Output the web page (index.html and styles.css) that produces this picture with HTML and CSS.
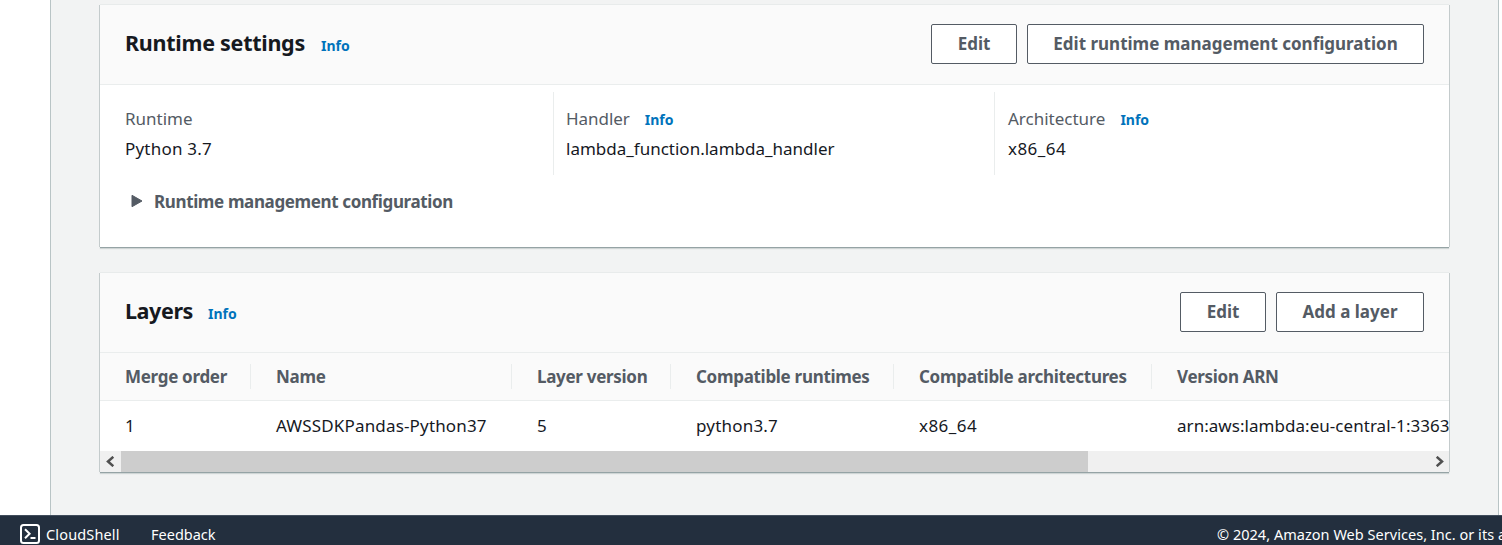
FILE: index.html
```html
<!DOCTYPE html>
<html lang="en">
<head>
<meta charset="utf-8">
<title>Lambda function</title>
<link rel="stylesheet" href="styles.css">
</head>
<body>
<div class="app">
  <main class="content">
    <section class="card runtime">
      <header class="card-header">
        <h2>Runtime settings</h2><a class="info">Info</a>
        <div class="actions"><button>Edit</button><button class="wide">Edit runtime management configuration</button></div>
      </header>
      <div class="columns">
        <div class="column"><div class="label">Runtime</div><div class="value version">Python 3.7</div></div>
        <div class="column"><div class="label name">Handler<a class="info">Info</a></div><div class="value">lambda_function.lambda_handler</div></div>
        <div class="column"><div class="label">Architecture<a class="info">Info</a></div><div class="value arch">x86_64</div></div>
      </div>
      <div class="expander">
        <svg width="12" height="14" viewBox="0 0 12 14"><path d="M1 1.3v11.4l10-5.7z" fill="#545b64" stroke="#545b64" stroke-linejoin="round"/></svg>
        <span>Runtime management configuration</span>
      </div>
    </section>
    <section class="card layers">
      <header class="card-header">
        <h2>Layers</h2><a class="info">Info</a>
        <div class="actions"><button>Edit</button><button class="add">Add a layer</button></div>
      </header>
      <div class="table">
        <div class="row head"><span>Merge order</span><span>Name</span><span>Layer version</span><span>Compatible runtimes</span><span>Compatible architectures</span><span>Version ARN</span></div>
        <div class="row"><span>1</span><span class="layer-name">AWSSDKPandas-Python37</span><span>5</span><span class="version">python3.7</span><span class="arch">x86_64</span><span class="arn">arn:aws:lambda:eu-central-1:3363</span></div>
      </div>
      <div class="scrollbar">
        <div class="arrow"><svg width="9" height="11" viewBox="0 0 9 11"><path d="M7.3 .8L2 5.5l5.3 4.7" fill="none" stroke="#505050" stroke-width="2.5"/></svg></div>
        <div class="thumb"></div>
        <div class="arrow next"><svg width="9" height="11" viewBox="0 0 9 11"><path d="M1.7 .8L7 5.5l-5.3 4.7" fill="none" stroke="#505050" stroke-width="2.5"/></svg></div>
      </div>
    </section>
  </main>
  <footer class="footer">
    <svg class="shell" width="20" height="20" viewBox="0 0 20 20" fill="none" stroke="#fff" stroke-width="2"><rect x="1" y="1" width="18" height="18" rx="2.5"/><path d="M5 5.2l4.6 4.5L5 14.2M10.5 14h5"/></svg>
    <span class="cloudshell">CloudShell</span>
    <span class="feedback">Feedback</span>
    <span class="copyright">© 2024, Amazon Web Services, Inc. or its a</span>
  </footer>
</div>
</body>
</html>
```
FILE: styles.css
```css
* { box-sizing: border-box; }
body { margin: 0; overflow: hidden; background: #fff; color: #16191f; font-family: "Noto Sans", sans-serif; font-size: 17px; }
.app { display: flex; flex-direction: column; height: 545px; }
.content { flex: none; height: 515px; margin-left: 50px; width: 1449px; padding: 5px 49px 0; background: #f2f3f3; border-left: 1px solid #b9c4c5; border-right: 1px solid #b9c4c5; }
.card { width: 1349px; background: #fff; box-shadow: 0 -1px 0 #e8ebeb, 0 1px 0 #95a3a5, 1px 0 0 #c4cbcc, -1px 0 0 #c4cbcc, 0 2px 1px #cfd5d5; }
.runtime { height: 242px; margin-bottom: 26px; }
.layers { height: 199px; }
.card-header { display: flex; height: 80px; padding: 0 25px; background: #fafafa; border-bottom: 1px solid #eaeded; }
h2 { margin: 23px 16px 0 0; font-size: 21.5px; line-height: 30px; letter-spacing: -.27px; white-space: nowrap; }
.layers h2 { margin-right: 15px; letter-spacing: -.4px; }
.info { color: #0073bb; font-size: 14px; line-height: 20px; font-weight: 700; letter-spacing: 0; }
.card-header .info { margin-top: 31px; }
.actions { display: flex; gap: 10px; margin: 19px 0 0 auto; }
button { width: 86px; height: 40px; padding: 0; border: 1px solid #545b64; border-radius: 2px; background: #fff; color: #545b64; font: 700 17px/38px "Noto Sans", sans-serif; letter-spacing: 0; white-space: nowrap; }
.wide { width: 397px; }
.add { width: 148px; }
.columns { display: flex; height: 90px; padding: 7px 0 0 12px; }
.column { width: 441px; height: 83px; padding: 14px 0 0 13px; border-right: 1px solid #eaeded; }
.column:first-child { width: 442px; }
.column:nth-child(2) { padding-left: 12px; }
.column:last-child { border-right: 0; }
.label { display: flex; height: 26px; color: #545b64; line-height: 26px; }
.name { letter-spacing: -.05px; }
.label .info { margin: 4px 0 0 15px; }
.value { margin-top: 4px; line-height: 26px; }
.version { letter-spacing: .2px; }
.arch { letter-spacing: .45px; }
.layer-name { letter-spacing: .16px; }
.arn { letter-spacing: .04px; }
.expander { display: flex; align-items: center; gap: 11px; height: 26px; margin-top: 13px; padding-left: 31px; color: #545b64; font-weight: 700; letter-spacing: -.37px; }
.table { height: 98px; overflow: hidden; }
.row { display: grid; grid-template-columns: 151px 261px 159px 223px 258px 272px; padding-left: 25px; height: 50px; line-height: 50px; white-space: nowrap; }
.head { height: 48px; align-items: center; background: #fafafa; border-bottom: 1px solid #eaeded; color: #545b64; font-weight: 700; line-height: 25px; letter-spacing: -.3px; }
.head span { border-left: 1px solid #eaeded; padding-left: 25px; margin-left: -26px; }
.head span:first-child { border-left-color: transparent; }
.scrollbar { display: flex; height: 21px; background: #f0f0f0; }
.arrow { display: flex; align-items: center; justify-content: center; width: 20px; }
.thumb { width: 967px; margin-left: 1px; background: #cdcdcd; }
.next { margin-left: auto; }
.footer { display: flex; height: 30px; padding: 8px 0 0 20px; background: #232f3e; border-top: 1px solid #414d5c; color: #fff; font-size: 14.5px; line-height: 20px; white-space: nowrap; overflow: hidden; }
.shell { flex: none; }
.cloudshell { width: 105px; margin-left: 6px; flex: none; letter-spacing: .15px; }
.feedback { flex: none; width: 1066px; }
.copyright { letter-spacing: .03px; }
```
